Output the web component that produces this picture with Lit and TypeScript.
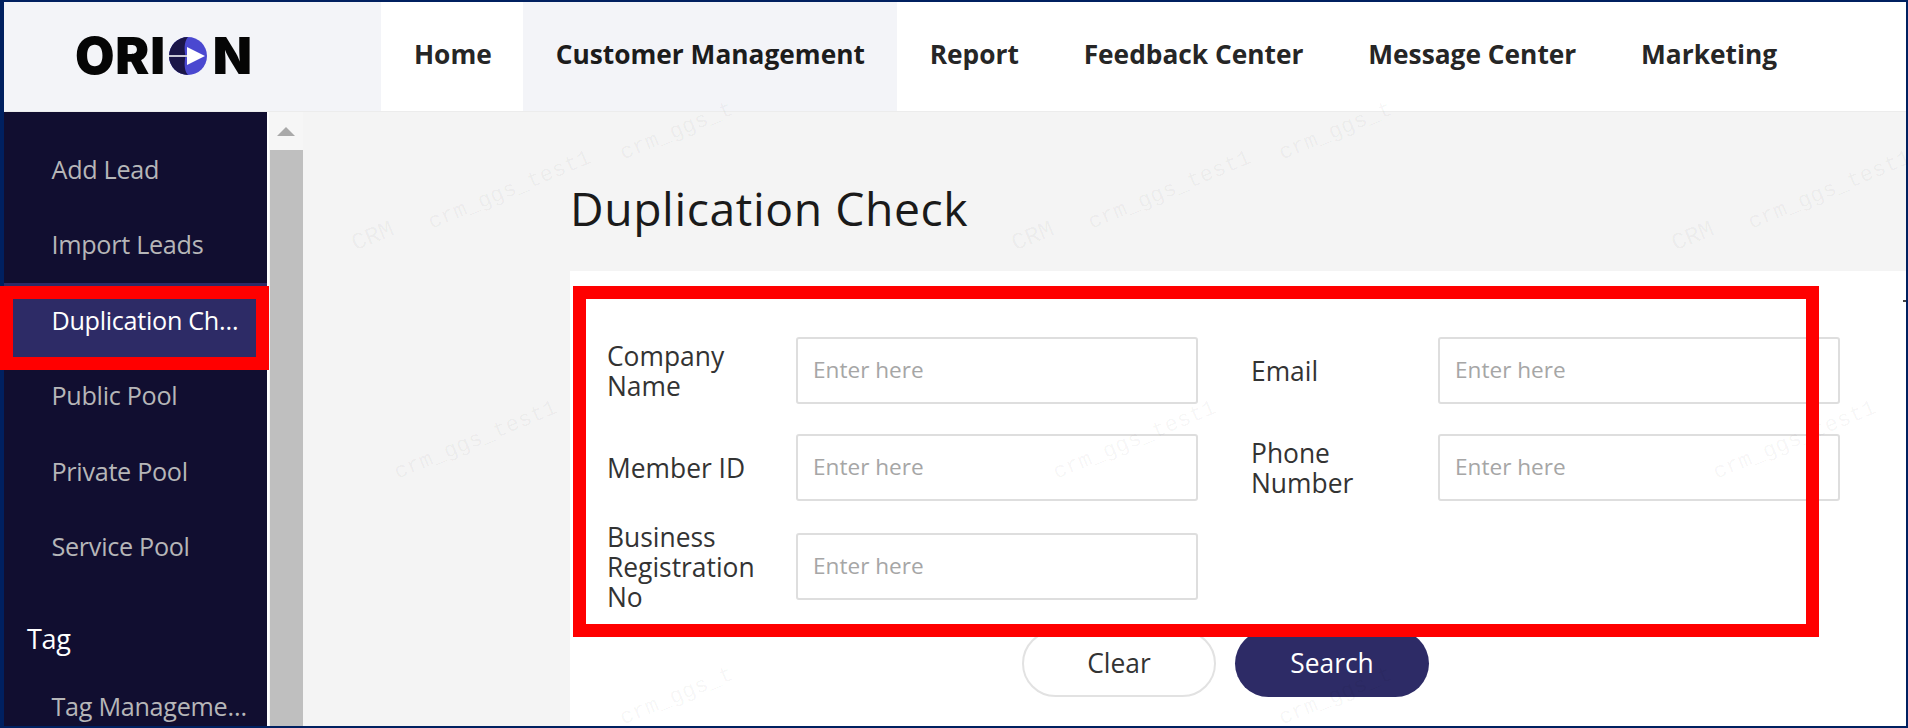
import { LitElement, html, css } from "lit";
import { customElement } from "lit/decorators.js";

const NAV = ["Home", "Customer Management", "Report", "Feedback Center", "Message Center", "Marketing"];
const SIDE = ["Add Lead", "Import Leads", "Duplication Check", "Public Pool", "Private Pool", "Service Pool"];
const WM: [string, number, number][] = [
  ["CRM", 373, 237], ["CRM", 1033, 237], ["CRM", 1693, 237],
  ["crm_ggs_test1", 510, 191], ["crm_ggs_test1", 1170, 191], ["crm_ggs_test1", 1830, 191],
  ["crm_ggs_test1", 476, 441], ["crm_ggs_test1", 1135, 441], ["crm_ggs_test1", 1795, 441],
  ["crm_ggs_t", 677, 132], ["crm_ggs_t", 1336, 132],
  ["crm_ggs_t", 677, 697], ["crm_ggs_t", 1336, 697],
];

@customElement("app-root")
export class AppRoot extends LitElement {
  static styles = css`
    :host {
      display: block; position: relative;
      width: 1908px; height: 728px; overflow: hidden;
      font-family: "Open Sans", "Noto Sans", sans-serif; background: #fff;
    }
    .frame { box-sizing: border-box; width: 1908px; height: 728px; overflow: hidden;
      border: 2px solid #002060; border-left-width: 4px; }
    .top { display: flex; height: 109px; background: #f3f4f8; }
    .logo { width: 377px; box-sizing: border-box; padding: 0 0 2px 71px; display: flex; align-items: center;
      font-family: Inter, sans-serif; font-weight: 900; font-size: 51px; color: #050505; letter-spacing: 0.8px; }
    .logo svg { width: 38px; height: 38px; margin: 0 6px 0 3px; }
    .tab { display: flex; align-items: center; padding: 0 32.4px 5px; font-weight: 700; font-size: 26.3px; color: #262626; }
    .tab.home { background: #fff; padding: 0 31.5px 5px 33px; }
    .tab.cur { background: #f3f4f8; color: #1c1c1c; }
    .top .tabs { display: flex; flex: 1; background: #fff; }
    .body { display: flex; height: 615px; border-top: 1px solid #ececec; box-sizing: border-box; }
    .side { width: 263px; background: #110e30; padding-top: 20px; box-sizing: border-box; overflow: hidden; }
    .item { height: 75.4px; line-height: 75.4px; padding: 0 17px 0 47.5px; font-size: 25.2px; color: #b6b6b8;
      white-space: nowrap; overflow: hidden; text-overflow: ellipsis; letter-spacing: -0.3px; }
    .item.on { background: #2d2b66; color: #fff; }
    .group { margin-top: 25px; height: 60px; line-height: 60px; padding-left: 23px; font-size: 27px; color: #fff; letter-spacing: -0.3px; }
    .bar { width: 34px; margin-left: 2px; background: #f6f6f6; display: flex; flex-direction: column; align-items: center; }
    .arrow { width: 0; height: 0; margin: 15px 0 14px; border: 9px solid transparent; border-top: 0; border-bottom: 9px solid #a9a9a9; }
    .thumb { width: 33px; flex: 1; background: #bfbfbf; }
    .main { flex: 1; background: #f4f4f4; padding-left: 267px; display: flex; flex-direction: column; }
    h1 { margin: 0; height: 159px; flex: none; box-sizing: border-box; padding-top: 67px; font-size: 46.3px; line-height: 60px;
      font-weight: 400; color: #1a1a1a; letter-spacing: 0.6px; }
    .card { flex: 1; background: #fff; padding: 66px 0 0 37px; }
    .form { display: grid; grid-template-columns: 590px 590px; column-gap: 54px; row-gap: 30px; }
    .field { display: flex; align-items: center; height: 67px; }
    .field.tall { margin-top: 2px; }
    label { width: 189px; flex: none; padding-right: 30px; box-sizing: border-box; font-size: 26.4px; line-height: 30px; color: #333; }
    .field:nth-child(even) label { width: 187px; }
    input { width: 402px; height: 67px; box-sizing: border-box; flex: none; border: 2px solid #dedede; border-radius: 3px;
      padding: 0 15px 2px; font: 22.6px "Open Sans", sans-serif; background: transparent; outline: none; }
    input::placeholder { color: #a6a6a6; opacity: 1; }
    .btns { display: flex; gap: 19px; margin: 30px 0 0 415px; }
    button { width: 194px; height: 67px; padding: 0 0 2px; border-radius: 34px; font: 26.4px "Open Sans", sans-serif; cursor: pointer; }
    .clear { background: #fff; border: 2px solid #e2e2e2; color: #333; }
    .search { background: #2d2b66; border: 0; color: #fff; }
    .wm { position: absolute; transform: translate(-50%, -50%) rotate(-22.5deg); white-space: nowrap; pointer-events: none;
      font: 22px/14px "Liberation Mono", monospace; letter-spacing: 0.2px; color: rgba(0,0,0,.045); }
    .wm.crm { letter-spacing: 0; font-size: 24px; }
    .red { position: absolute; box-sizing: border-box; border: 13px solid #f00; pointer-events: none; }
    .r1 { left: 0; top: 286px; width: 269px; height: 84px; }
    .r2 { left: 573px; top: 286px; width: 1246px; height: 351px; }
    .dot { position: absolute; left: 1903px; top: 300px; width: 3px; height: 2px; background: #444; }
  `;

  render() {
    return html`
      <div class="frame">
        <div class="top">
          <div class="logo"><span>ORI</span>
            <svg viewBox="0 0 38 38" role="img" aria-label="O">
              <circle cx="19" cy="19" r="19" fill="#4a48d0"/>
              <path d="M19 0A19 19 0 0 0 19 38C14.500 33 15.500 24 16.500 19C15.500 14 14.500 5 19 0Z" fill="#1b1648"/>
              <path d="M0 18h19v2H0z" fill="#c9c9d6"/>
              <path d="M18 10L36 19L18 28Z" fill="#fff"/>
            </svg><span>N</span></div>
          <div class="tabs">
            ${NAV.map((n, i) => html`<div class="tab ${i === 0 ? "home" : i === 1 ? "cur" : ""}">${n}</div>`)}
          </div>
        </div>
        <div class="body">
          <div class="side">
            ${SIDE.map((s, i) => html`<div class="item ${i === 2 ? "on" : ""}">${s}</div>`)}
            <div class="group">Tag</div>
            <div class="item">Tag Management</div>
          </div>
          <div class="bar"><div class="arrow"></div><div class="thumb"></div></div>
          <div class="main">
            <h1>Duplication Check</h1>
            <div class="card">
              <div class="form">
                <div class="field"><label>Company Name</label><input placeholder="Enter here" /></div>
                <div class="field"><label>Email</label><input placeholder="Enter here" /></div>
                <div class="field"><label>Member ID</label><input placeholder="Enter here" /></div>
                <div class="field"><label>Phone Number</label><input placeholder="Enter here" /></div>
                <div class="field tall"><label>Business Registration No</label><input placeholder="Enter here" /></div>
              </div>
              <div class="btns"><button class="clear">Clear</button><button class="search">Search</button></div>
            </div>
          </div>
        </div>
      </div>
      ${WM.map(([t, x, y]) => html`<div class="wm ${t === "CRM" ? "crm" : ""}" style="left:${x}px;top:${y}px">${t}</div>`)}
      <div class="red r1"></div>
      <div class="red r2"></div>
      <div class="dot"></div>
    `;
  }
}
